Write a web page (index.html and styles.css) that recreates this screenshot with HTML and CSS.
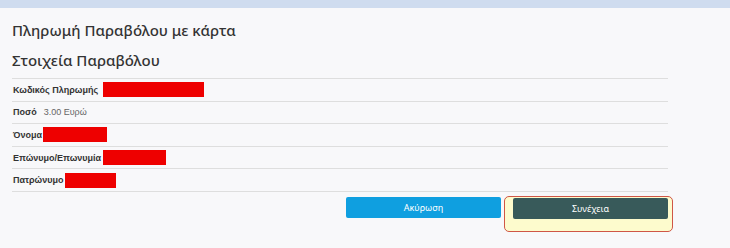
FILE: index.html
```html
<!DOCTYPE html>
<html lang="el">
<head>
    <meta charset="UTF-8">
    <meta name="viewport" content="width=device-width, initial-scale=1.0">
    <title>Πληρωμή Παραβόλου με κάρτα</title>
    <link rel="stylesheet" href="styles.css">
</head>
<body>
    <div class="top-bar"></div>

    <div class="payment-container">
        <h1 class="payment-title">Πληρωμή Παραβόλου με κάρτα</h1>
        <h2 class="section-title">Στοιχεία Παραβόλου</h2>

        <div class="payment-details">
            <div class="detail-row">
                <span class="detail-label">Κωδικός Πληρωμής</span>
                <span class="redacted redacted-code"></span>
            </div>
            <div class="detail-row">
                <span class="detail-label">Ποσό</span>
                <span class="detail-value">3.00 Ευρώ</span>
            </div>
            <div class="detail-row">
                <span class="detail-label">Όνομα</span>
                <span class="redacted redacted-name"></span>
            </div>
            <div class="detail-row">
                <span class="detail-label">Επώνυμο/Επωνυμία</span>
                <span class="redacted redacted-surname"></span>
            </div>
            <div class="detail-row">
                <span class="detail-label">Πατρώνυμο</span>
                <span class="redacted redacted-father"></span>
            </div>
        </div>

        <div class="payment-actions">
            <button class="btn btn-cancel">Ακύρωση</button>
            <div class="highlight">
                <button class="btn btn-continue">Συνέχεια</button>
            </div>
        </div>
    </div>
</body>
</html>
```

FILE: styles.css
```css
body {
    font-family: "Noto Sans", "Open Sans", sans-serif;
    margin: 0;
    padding: 0;
    background-color: #f8f8fa;
    color: #333;
}
.top-bar {
    height: 8px;
    background-color: #cfdcef;
}
.payment-container {
    width: 656px;
    padding: 0 12px;
}
.payment-title {
    font-size: 15px;
    font-weight: 500;
    margin: 0;
    padding-top: 12px;
    line-height: 20px;
}
.section-title {
    font-size: 15px;
    font-weight: 500;
    margin: 0;
    padding-top: 10px;
    line-height: 20px;
}
.payment-details {
    margin-top: 8px;
    border-top: 1px solid #dedede;
}
.detail-row {
    display: flex;
    align-items: center;
    height: 21.6px;
    border-bottom: 1px solid #dedede;
    font-family: "Liberation Sans", Arial, sans-serif;
    font-size: 9px;
}
.detail-label {
    font-weight: bold;
    color: #333;
    padding-left: 1px;
}
.detail-value {
    color: #666;
    margin-left: 7px;
}
.redacted {
    display: inline-block;
    height: 15px;
    background-color: #ee0000;
    margin-left: 5px;
}
.redacted-code { width: 101px; }
.redacted-name { width: 64px; margin-left: 1px; }
.redacted-surname { width: 63px; margin-left: 2px; }
.redacted-father { width: 51px; margin-left: 2px; }

.payment-actions {
    display: flex;
    justify-content: flex-end;
    align-items: flex-start;
    gap: 12px;
    margin-top: 4px;
}
.btn {
    width: 155px;
    height: 21px;
    border: none;
    border-radius: 2px;
    color: white;
    font-family: "Noto Sans", sans-serif;
    font-size: 9px;
    cursor: pointer;
}
.btn-cancel {
    background-color: #0f9fe0;
    margin-top: 1px;
}
.btn-continue {
    background-color: #385a5a;
    display: block;
}
/* highlight round the continue button */
.highlight {
    margin: 0 -5px 0 -9px;
    padding: 1px 4px 12px 8px;
    background-color: #fdfbcd;
    border: 1px solid #cf5646;
    border-radius: 5px;
}
```
